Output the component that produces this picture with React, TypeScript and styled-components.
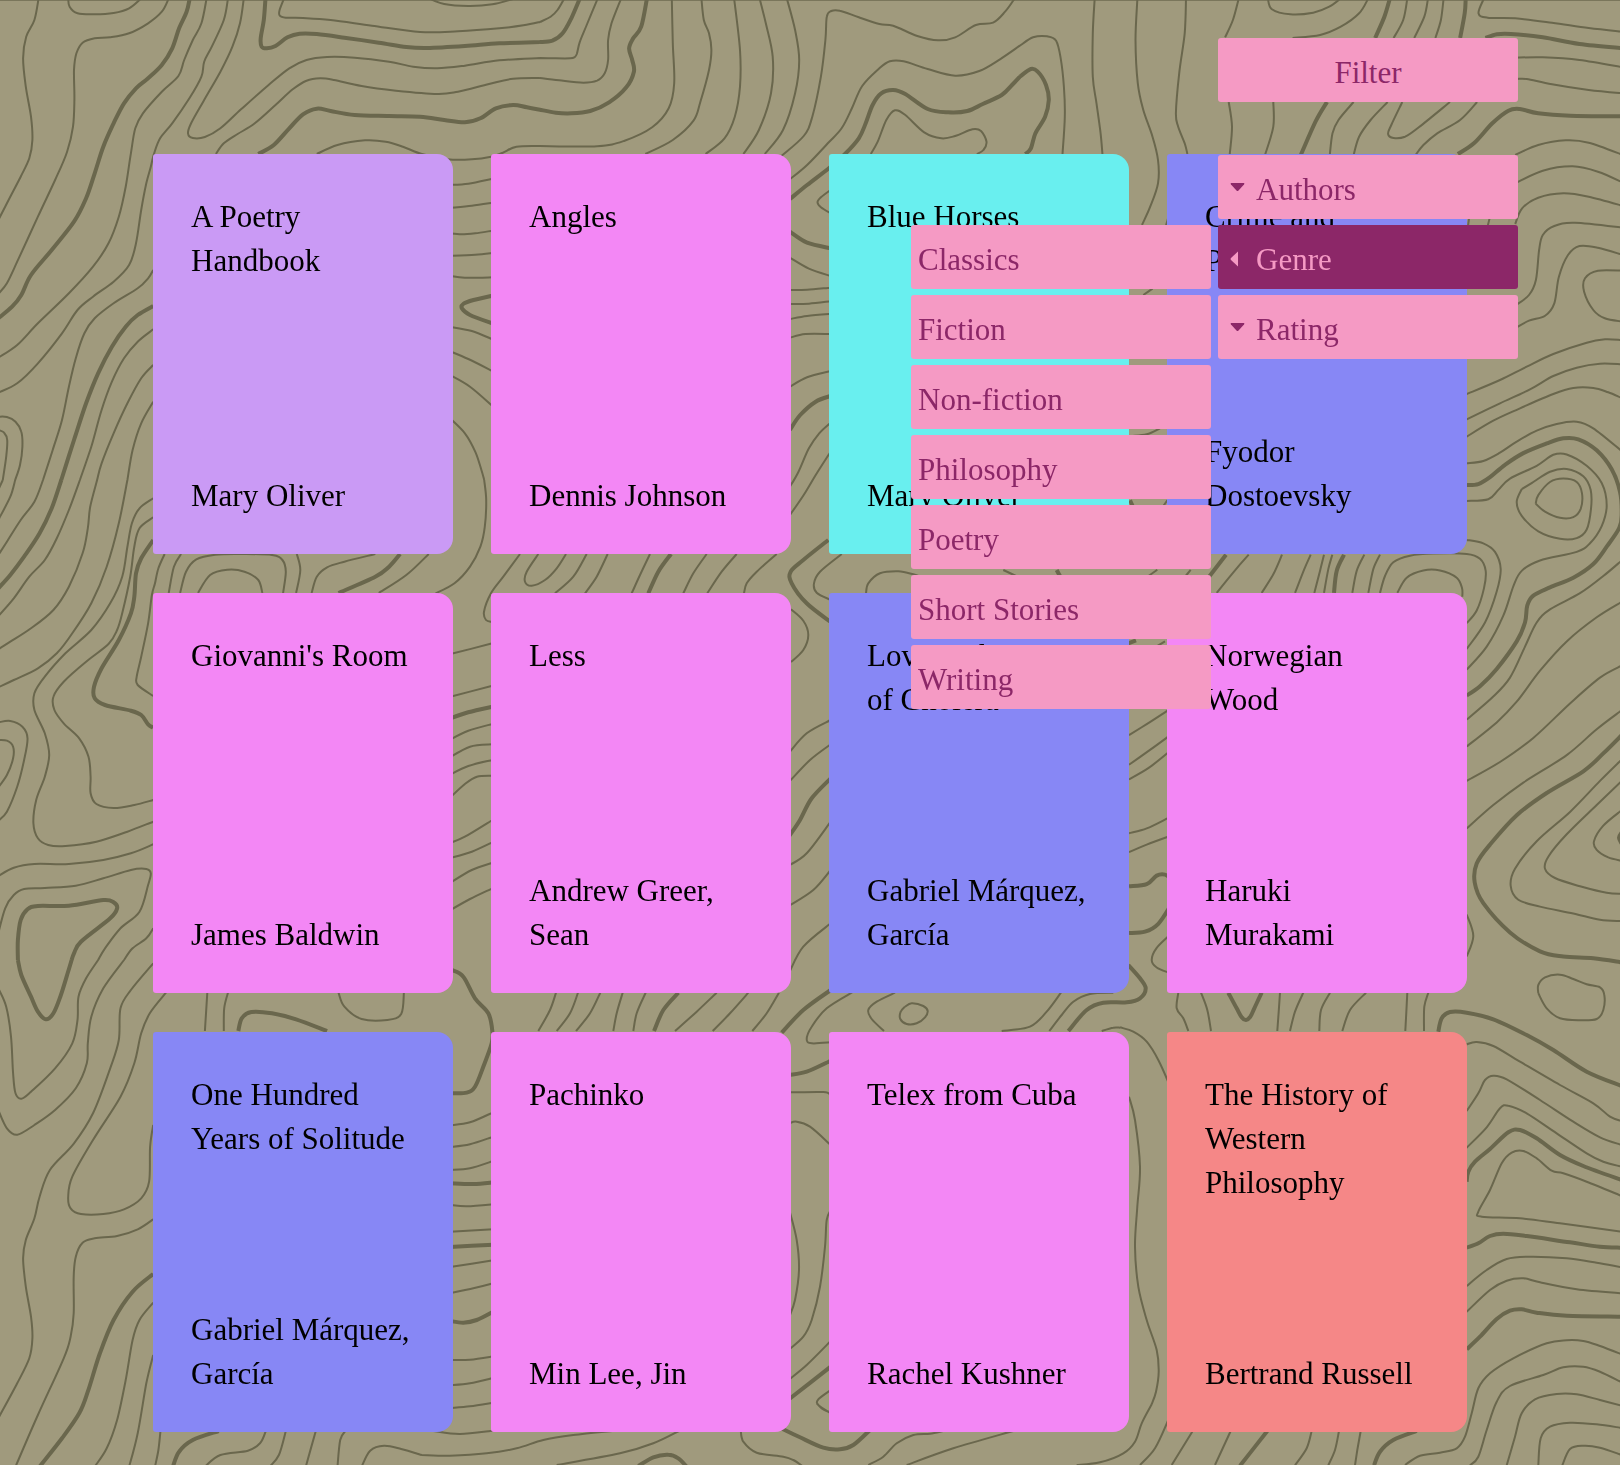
import React, { useState } from 'react';
import styled, { createGlobalStyle, css } from 'styled-components';

/* ---------- palette ---------- */

const color = {
  land: '#a09a7d',
  contour: '#6a674d',
  pink: '#f59ac4',
  plum: '#8c2768',
  poetry: '#ca9af5',
  fiction: '#f387f5',
  nature: '#69efef',
  classic: '#8787f5',
  essay: '#f58787',
};

const GlobalStyle = createGlobalStyle`
  *, *::before, *::after { box-sizing: border-box; }
  body {
    margin: 0;
    background: ${color.land};
    color: #000;
    font-family: 'Liberation Serif', serif;
    font-size: 31px;
    line-height: 44px;
  }
`;

/* ---------- topographic backdrop ---------- */

type Sheet = { x: number; y: number; kx: number; ky: number; thin: string; bold: string };

/* Each survey sheet has its own origin and scale; contours are separated by ";". */
const sheets: Sheet[] = [
  {
    x: 0, y: 0, kx: 2.904, ky: 3,
    thin: `112,-5 100,60 76,110 67,175 75,260 90,350 94,420 85,475 60,530 25,600 -5,660;
198,-5 202,20 225,40 275,43 330,39 375,25 410,-5;
490,-5 470,35 430,70 375,100 320,112 275,115 240,128 222,160 215,210 216,300 212,380 195,455 160,540 110,650 50,785 20,850 -5,882;
600,-5 585,70 560,120 535,180 518,228 470,275 415,340 393,385 380,460 365,560 345,650 315,730 270,800 200,880 110,970 50,1035 -5,1073;
662,-5 650,60 615,140 593,185 585,230 550,295 500,370 465,415 447,462 438,500 425,550 410,630 395,730 375,795 330,845 270,890 225,930 180,1000 110,1090 50,1150 -5,1178;
708,-5 697,70 675,140 640,215 590,305 555,370 546,400 560,414 595,411 640,385 700,328 780,255 840,205 890,180 950,171 1030,173 1130,185 1200,200 1270,205 1350,197 1450,181 1568,174;
825,-5 812,30 812,46 830,53 880,54 960,60 1080,77 1220,96 1330,94 1450,85 1520,76 1568,66;
1245,-5 1290,12 1360,18 1430,13 1490,-3;
627,462 650,430 690,402 740,370 800,315 850,268 890,242 930,235 970,240 1050,258 1150,272 1270,282 1330,275 1420,252 1490,236 1568,234;
920,462 980,435 1060,421 1120,425 1170,440 1225,462 1300,478 1370,478 1426,470 1460,458 1500,440 1568,438;
1305,555 1360,551 1430,536;1305,624 1370,617 1430,608;1305,700 1340,703 1380,700 1430,692;1305,768 1380,764 1430,759;1305,827 1350,833 1430,832;
1305,980 1370,993 1430,1018;1305,1053 1360,1077 1430,1113;1305,1124 1365,1160 1430,1218;
1305,1253 1350,1300 1380,1355 1398,1410 1406,1440;
445,810 430,835 400,865 330,910 275,955 245,1000 220,1075 200,1160 180,1260 153,1350 125,1440;
445,988 400,1025 360,1075 325,1145 295,1230 265,1340 232,1440;
445,1095 410,1135 370,1210 330,1300 295,1390 282,1440;
445,1205 410,1270 385,1350 370,1440;
-5,1250 20,1251 45,1265 62,1295 65,1340 58,1395 44,1440;
-5,1290 12,1298 21,1320 18,1370 8,1440`,
    bold: `551,-5 542,35 520,85 500,145 470,195 430,235 395,265 360,310 330,370 300,440 275,520 250,595 215,665 150,750 90,825 62,885 35,920 -5,955;
771,-5 766,60 757,115 760,140 775,145 800,138 835,112 870,101 920,102 1000,113 1100,128 1180,141 1240,144 1350,138 1450,130 1568,126;
750,462 795,435 840,385 880,343 920,326 960,333 1030,345 1130,348 1220,350 1290,360 1350,367 1395,355 1440,325 1490,315 1530,322 1568,329;
1435,886 1375,900 1345,912 1342,926 1365,945 1435,972;
445,918 400,945 365,980 325,1040 285,1120 250,1210 215,1320 178,1440`,
  },
  {
    x: 480, y: 0, kx: 2.904, ky: 3,
    thin: `174,66 205,50 225,30 245,-5;
174,174 220,175 262,175 274,172 281,162 290,125 310,75 342,-5;
174,234 230,241 300,248 340,242 362,220 372,180 372,120 382,70 410,-5;
174,438 340,439 420,422 500,382 548,325 564,250 560,130 557,-5;
480,462 560,420 620,362 640,305 665,210 672,150 665,100 650,60 643,-5;
655,462 710,415 740,350 755,260 755,150 738,-5;
765,462 810,390 845,280 850,170 830,70 812,-5;
827,462 880,390 915,280 927,180 915,90 891,-5;
875,468 940,408 965,350 990,230 1003,120 1007,50 1020,33 1045,32 1100,52 1160,72 1200,77 1270,108 1330,121 1380,112 1440,75 1490,68 1525,35 1553,-5;
900,538 950,495 1010,430 1050,385 1080,325 1110,258 1160,205 1190,184 1230,184 1300,207 1380,227 1450,213 1510,178 1568,137;
1135,462 1155,425 1180,360 1205,331 1235,345 1290,397 1340,415 1380,408 1430,388 1455,393 1471,425 1462,450 1443,462;
1018,570 990,592 980,607 990,622 1018,640;
900,773 955,806 1018,828;900,870 950,869 1018,863;900,912 955,911 1018,904;900,957 950,948 1018,942;900,1013 945,1002 1018,1002;
900,1160 950,1132 1018,1113;900,1460 925,1415 955,1345 985,1300 1018,1268;1018,1355 975,1425 940,1485 900,1545`,
    bold: `174,126 210,122 240,100 265,55 290,-5;
174,329 220,338 265,340 320,333 375,307 425,262 447,215 442,180 433,145 445,115 468,80 485,-5;
900,597 950,555 1015,503 1060,462 1100,415 1120,370 1140,315 1165,280 1200,270 1235,282 1300,327 1360,337 1415,333 1460,312 1515,285 1545,255 1568,230;
900,695 950,728 1018,745;900,1290 930,1245 975,1205 1018,1188`,
  },
  {
    x: 900, y: 0, kx: 2.178, ky: 3,
    thin: `261,137 290,112 320,109 340,122 350,175 357,260 359,350 354,462;
424,-5 420,100 420,230 428,310 437,400 441,465;
517,-5 513,120 518,250 530,330 550,410 562,480 562,550 545,620 527,675;
623,-5 620,100 608,220 601,340 606,380 620,430 626,462;
738,-5 725,60 708,112;716,306 723,380 718,465;813,306 813,380 795,465;
801,-5 810,28 850,43 900,38 935,20 960,-5;
1020,-5 1000,40 960,80 915,105 855,114;
1105,-5 1096,60 1075,114;988,306 955,360 942,400 936,465;
1150,-5 1142,50 1120,114;1062,306 1025,360 1000,410 988,465;
1184,-5 1178,60 1166,114;
1094,306 1070,375 1063,402 1075,414 1100,410 1130,382 1198,306;
1272,-5 1260,40 1280,53 1340,55 1420,68 1500,84 1575,95;
1340,173 1400,172 1480,180 1575,202;
1345,237 1365,237 1420,253 1500,270 1575,280;
1257,306 1220,360 1170,400 1140,435 1123,465;
1340,465 1390,435 1450,421 1500,428 1575,465;
1340,550 1400,512 1465,499 1520,515 1575,548;
1340,672 1355,625 1390,593 1445,580 1500,590 1575,618;
1340,917 1370,885 1385,840 1392,750 1400,705 1425,678 1470,668 1575,683;
1340,985 1370,962 1405,947 1425,910 1435,830 1455,765 1480,738 1520,743 1575,765;
1575,812 1520,812 1492,835 1490,875 1510,930 1535,955 1575,965;
1240,650 1237,678;1285,650 1280,678;584,655 579,678;550,866 530,885`,
    bold: `261,230 285,207 300,215 318,255 324,300 316,350 295,400 285,445 273,462;
1067,-5 1055,50 1035,114;930,306 905,365 873,465;1232,-5 1230,40 1220,114;
1275,114 1300,103 1330,102 1400,112 1480,132 1575,145;
1215,462 1250,430 1290,370 1325,332 1350,327 1390,340 1460,347 1575,349`,
  },
  {
    x: 1120, y: 340, kx: 3, ky: 3,
    thin: `1040,162 1140,120 1220,80 1300,42 1400,8 1455,-2 1505,0;
1040,238 1140,190 1230,148 1300,108 1370,83 1440,71 1505,73;
1040,290 1120,242 1200,205 1300,162 1360,144 1420,144 1465,157 1505,174;
1040,370 1090,363 1140,338 1190,305 1250,272 1310,252 1370,245 1420,265 1505,333;
35,288 80,283 120,265`,
    bold: '',
  },
  {
    x: 0, y: 480, kx: 2.904, ky: 3,
    thin: `1406,0 1412,60 1408,140 1395,200 1365,260 1320,310 1265,340;
125,0 100,65 60,120 20,185 -5,225;
232,0 200,90 165,175 130,240 85,290 40,355 -5,408;
282,0 262,80 255,145 240,220 200,320 155,390 90,445 30,485 -5,508;
370,0 345,130 310,260 265,370 210,460 165,520 110,565 40,600 -5,622;
44,0 30,50 -5,120;8,0 -5,30;
445,55 405,85 383,130 370,200 355,290 320,370 265,450 190,520 130,590 100,640 100,690 130,760 143,825 130,890 105,960 97,1030 110,1075 140,1095 190,1098 280,1085 370,1055 445,1025;
445,112 405,145 390,200 378,290 355,400 340,450 315,492 250,545 185,605 155,650 158,690 185,730 230,775 257,830 263,890 263,940 280,972 330,984 390,975 445,960;
478,222 460,265 450,310 441,345 430,430 410,530 397,590 400,615 445,648;
526,222 505,260 490,339;
523,339 540,275 570,238 625,224 700,222 790,225 820,240 830,275 822,339;
575,339 610,285 660,269 710,275 750,300 762,339;
862,222 872,270 860,339;
905,339 920,290 950,262 1000,245 1090,222;
1100,339 1180,285 1245,222;
-5,727 30,723 65,740 80,775 70,840 50,920 20,995 -5,1022;
-5,780 20,782 38,800 38,835 20,885 -5,922;
-5,1188 40,1163 100,1152 200,1152 300,1140 380,1120 445,1093;
-5,1360 15,1285 40,1245 70,1227 130,1224 220,1217 300,1195 380,1170 425,1167 438,1180 430,1215 405,1295 350,1345 305,1405 285,1440;
445,1345 425,1375 385,1405 360,1440;
1305,523 1430,490;1305,651 1430,617;1305,780 1360,752 1430,732;1305,833 1365,800 1430,793;1305,885 1360,858 1430,840;
1305,955 1350,912 1385,890 1430,887;1305,1090 1350,1070 1430,1020;1305,1135 1370,1115 1430,1087;1305,1210 1370,1170 1430,1148;1305,1292 1365,1257 1430,1225`,
    bold: `178,0 150,85 115,160 70,230 30,285 -5,325;
445,180 410,235 395,280 390,350 380,400 345,480 295,565 273,620 275,655 305,675 380,692 410,705 430,733 445,743;
983,339 1090,290 1130,260 1162,222;
52,1440 52,1380 60,1320 80,1288 110,1278 200,1277 300,1260 330,1267 340,1285 320,1315 235,1385 215,1420 208,1440;
1305,716 1360,697 1430,680`,
  },
  {
    x: 0, y: 960, kx: 2.904, ky: 3,
    thin: `285,0 250,55 228,110 225,180 210,250 160,325 90,395 62,416 45,400 38,340 32,230 18,140 -5,85;
360,0 300,85 265,170 255,250 252,310 220,385 160,450 100,495 50,524 20,505 -5,450;
445,10 380,90 350,145 345,240 320,325 270,460 215,550 145,630 115,710 100,775 75,840 67,895 75,980 90,1070 94,1135 85,1195 50,1270 -5,1375;
482,98 435,160 410,220 390,310 350,410 270,540 210,650 198,710 205,745 235,762 300,762 360,748 410,715 433,665 436,560 445,495;
445,778 400,808 340,828 275,835 240,848 220,890 214,950 214,1060 205,1130 185,1195 110,1365 45,1520;
445,1028 405,1080 385,1140 365,1260 340,1380 310,1465 275,1520;
445,1185 425,1270 400,1420 375,1520;466,1413 460,1470 450,1520;
602,98 595,213;662,98 651,145 650,213;
983,98 1000,140 1050,177 1125,180 1165,162 1173,98;
772,1413 755,1450 720,1472 640,1485 597,1518;830,1413 810,1485 785,1518;917,1413 888,1520;1003,1413 988,1440 980,1520;
1050,1520 1075,1472 1115,1457 1165,1467 1225,1485`,
    bold: `52,0 62,45 90,110 110,155 133,178 155,160 175,110 195,45 208,0;
445,942 385,995 330,1080 290,1180 255,1295 230,1360 180,1435 115,1520;
692,213 702,175 730,156 790,160 860,178 950,213;
635,1413 560,1440 520,1475 502,1520`,
  },
  {
    x: 420, y: 540, kx: 3, ky: 3,
    thin: `300,42 250,110 213,160 192,215 198,240 215,246;
355,42 320,95 315,125 335,137 375,120 410,85 438,42;
500,42 460,110 405,160;563,42 530,110 495,160;690,42 660,105 635,160;860,42 820,100 790,160;950,42 905,95 862,160;1070,42 1010,95 980,130 972,160;
1265,42 1200,95 1182,130 1190,158 1232,180;
1113,208 1150,242 1165,285 1150,330 1113,366;
1108,637 1160,580 1232,540;1108,725 1170,660 1232,613;1108,976 1160,940 1232,845;1108,1097 1180,1050 1232,990;1108,1297 1150,1220 1232,1150;
408,1358 390,1410 355,1473;474,1358 450,1420 410,1473;541,1358 510,1420 468,1473;608,1358 590,1420 580,1473;677,1358 650,1420 640,1473;
890,1358 830,1415 765,1473;985,1358 930,1420 878,1473;1077,1358 1040,1420 997,1473;
1300,1355 1220,1405 1175,1460 1160,1498 1175,1510 1232,1507`,
    bold: `753,42 715,95 685,160;
1225,0 1150,60 1112,95 1115,130 1160,190 1232,246;
1108,888 1140,840 1175,775 1232,715;
775,1358 730,1410 702,1473;1232,1350 1150,1410 1085,1478;
96,1290 130,1310 165,1375 205,1420 217,1473 215,1510 190,1580 165,1640 140,1658 96,1660`,
  },
  {
    x: 780, y: 540, kx: 3, ky: 3,
    thin: `258,160 265,130 300,100 355,94 400,103 425,112;670,90 715,111;
345,1358 290,1385 265,1410 275,1437 312,1473;
375,1400 395,1390 430,1398 443,1413 435,1432 410,1450 380,1452 361,1437 362,1415 375,1400;
843,1358 800,1415 750,1460 665,1473;
1000,1358 930,1362 880,1385 845,1425 808,1473;
965,1473 1000,1463 1020,1463`,
    bold: `830,90 842,112;
1045,1275 1080,1315 1097,1345 1080,1375 1040,1387 970,1388 920,1410 865,1473`,
  },
  {
    x: 1120, y: 440, kx: 3, ky: 2.904,
    thin: `1040,177 1105,172 1135,145 1170,112 1250,75 1300,43 1340,42 1400,75 1445,125 1460,190 1445,250 1410,300 1370,325 1260,350 1205,380 1180,425 1150,510 1100,600 1040,667;
1205,143 1240,122 1290,92 1340,84 1390,105 1412,145 1413,200 1400,260 1370,285 1320,287 1255,265 1205,220 1190,180 1205,143;
1247,185 1255,160 1290,122 1330,112 1370,122 1386,155 1382,200 1360,224 1320,226 1275,208 1247,185;
1040,290 1090,300 1125,325 1142,375 1130,440 1095,530 1040,607;
780,444 795,395 820,355 870,336 940,330 1040,331 1080,345 1097,380 1092,430 1070,495 1040,532;
832,444 860,400 910,379 960,379 1010,400 1026,430 1027,455;
780,333 760,375 745,444;733,333 710,380 697,444;637,333 625,375 612,444;612,333 600,380 583,444;572,333 553,375 525,444;
486,333 460,390 425,444;386,333 335,390 290,444;212,377 193,400;112,377 78,400;105,602 135,585;
1505,350 1450,395 1380,445 1290,492 1250,530 1215,600 1170,690 1120,745 1040,812;
1505,470 1430,515 1340,585 1260,670 1190,760 1130,820 1040,890;
1505,655 1440,690 1350,765 1240,865 1140,935 1040,990;
1505,785 1430,840 1340,915 1210,995 1120,1060 1040,1128;
1505,928 1440,990 1350,1080 1250,1165 1185,1245 1172,1295 1195,1335 1260,1355 1360,1375 1440,1393 1505,1397;
1505,990 1430,1060 1340,1145 1285,1210 1275,1245 1305,1272 1380,1296 1460,1315 1505,1318;
1505,1075 1450,1120 1422,1165 1430,1190 1465,1212 1505,1222;
1040,1378 1060,1440 1040,1500;
27,857 80,825 144,785;27,943 90,900 144,862;27,986 85,953 144,908;27,1142 80,1128 144,1098;27,1197 80,1175 144,1152;
150,1437 110,1475 95,1510 110,1532 150,1548;142,175 130,192`,
    bold: `1040,131 1075,128 1110,108 1155,72 1210,38 1280,10 1330,-5 1375,-2 1430,30 1475,85 1500,150 1505,215 1498,255 1460,310 1420,360 1360,400 1290,428 1240,452 1222,480 1215,530 1190,585 1130,665 1080,715 1040,742;
672,333 650,380 642,444;318,333 265,400;25,590 48,582;30,175 38,192;
1505,857 1450,910 1390,962 1280,1025 1190,1090 1110,1175 1070,1230 1064,1285 1090,1345 1170,1430 1260,1485 1330,1500 1420,1505 1505,1517;
1505,1140 1497,1155 1505,1172;
27,1296 80,1290 110,1265 135,1262 150,1272;
27,1432 75,1428 115,1405 150,1355`,
  },
  {
    x: 1120, y: 960, kx: 3, ky: 3,
    thin: `0,202 40,215 80,245 115,300 150,378;
27,410 45,480 60,620 52,740 45,860 55,980 80,1080 110,1170 116,1235 108,1295 95,1333;
175,98 170,145 190,175 205,213;243,98 262,150 273,213;480,98 472,213;550,98 525,155 510,213;630,98 603,150 598,213;738,98 690,150 667,213;862,98 856,213;925,98 913,140 912,213;
1255,100 1255,75 1275,52 1320,44 1360,57 1400,73 1440,82 1453,105 1450,150 1430,177 1380,181 1320,175 1280,145 1255,100;
1040,253 1070,246 1120,258 1200,305 1320,375 1420,430 1470,470 1505,483;
1040,453 1075,400 1095,360 1120,347 1160,358 1260,420 1360,485 1440,532 1505,555;
1040,563 1100,502 1140,445 1165,437 1220,460 1310,520 1400,580 1450,605 1505,620;
1505,708 1400,665 1330,640 1295,632 1250,595 1210,573 1175,578 1145,610 1110,690 1075,755 1085,770 1200,775 1320,790 1505,815;
1040,978 1100,930 1160,897 1230,890 1340,895 1430,908 1505,922;
1040,1055 1110,990 1160,962 1210,955 1260,967 1370,988 1505,1000;
1505,1183 1440,1158 1390,1143 1340,1141 1280,1150 1180,1195 1110,1240 1075,1285 1055,1360 1035,1430 1010,1465 960,1478 900,1487 855,1515;
1505,1267 1440,1235 1390,1220 1330,1222 1270,1245 1170,1278 1130,1325 1100,1410 1075,1490 1050,1516;
1505,1337 1440,1320 1370,1303 1310,1302 1245,1318 1205,1360 1185,1430 1160,1516;
1505,1404 1430,1393 1350,1388 1290,1400 1262,1435 1255,1516;
1505,1485 1440,1463 1390,1457 1350,1467 1327,1516;
722,1413 712,1470 705,1516;657,1413 645,1470 625,1516;575,1413 560,1465 525,1516`,
    bold: `325,98 350,145 365,172 378,180 391,170 403,145 425,98;
955,215 965,175 990,156 1040,158 1120,178 1220,225 1300,270 1400,335 1505,378;
1040,665 1045,635 1065,605 1110,567 1165,517 1200,510 1250,535 1320,585 1390,618 1505,660;
1040,863 1075,850 1110,828 1150,821 1220,828 1350,847 1440,860 1505,863;
1040,1168 1080,1130 1130,1077 1170,1052 1205,1048 1250,1058 1340,1067 1505,1070;
890,1413 820,1440 780,1475 762,1516`,
  },
  {
    x: 420, y: 980, kx: 3, ky: 3,
    thin: `1108,337 1210,336 1232,345;
1108,430 1130,425 1170,440 1232,495;
1108,690 1130,780 1137,870 1125,960 1108,1010;
1232,690 1220,720 1215,800 1200,920 1175,1020 1150,1070 1108,1108;
1108,1198 1160,1155 1232,1083;1232,1230 1195,1258 1195,1275 1232,1300;
90,436 150,427 220,397;90,501 150,493 220,470;90,570 150,565 220,543;90,675 140,679 220,673;90,755 220,748;90,861 220,841;90,939 160,925 220,910;
90,1140 150,1139 220,1129;90,1216 150,1210 220,1194;90,1284 150,1279 220,1268;
40,1353 120,1362 220,1352;
5,1425 90,1427 200,1420 290,1405 370,1380 460,1365 585,1352;
410,1455 600,1420 700,1390 777,1353;
962,1350 970,1385 1010,1418 1090,1430 1120,1440 1150,1460`,
    bold: `1108,285 1160,275 1232,242;1108,1257 1232,1160;
90,610 160,612 220,607;90,801 220,794;90,1023 130,1028 170,1020 220,995;
655,1458 700,1432 745,1424 775,1435 800,1460`,
  },
  {
    x: 780, y: 1405, kx: 3, ky: 3,
    thin: `110,-5 125,10 150,22;
265,180 310,155 350,115 400,90 450,86 490,78;
380,180 520,130 700,78;
890,180 960,172 1030,145 1065,110 1085,55 1115,-2;
1080,180 1125,130 1165,45;1175,180 1238,78;1305,180 1352,78`,
    bold: `0,68 60,97 130,128 180,133 220,120 270,75;1380,182 1462,78`,
  },
];

/* Runs a smooth curve through every surveyed point of each contour. */
function smooth(sheet: Sheet, lines: string): string {
  return lines
    .split(';')
    .filter((line) => line.trim())
    .map((line) => {
      const p = line
        .trim()
        .split(/\s+/)
        .map((pair) => {
          const [x, y] = pair.split(',').map(Number);
          return [sheet.x + x / sheet.kx, sheet.y + y / sheet.ky];
        });
      let d = `M${p[0][0].toFixed(1)} ${p[0][1].toFixed(1)}`;
      for (let i = 0; i < p.length - 1; i += 1) {
        const a = p[i - 1] ?? p[i];
        const b = p[i];
        const c = p[i + 1];
        const e = p[i + 2] ?? c;
        const pts = [
          b[0] + (c[0] - a[0]) / 6, b[1] + (c[1] - a[1]) / 6,
          c[0] - (e[0] - b[0]) / 6, c[1] - (e[1] - b[1]) / 6,
          c[0], c[1],
        ];
        d += `C${pts.map((n) => n.toFixed(1)).join(' ')}`;
      }
      return d;
    })
    .join('');
}

const thinPath = sheets.map((s) => smooth(s, s.thin)).join('');
const boldPath = sheets.map((s) => smooth(s, s.bold)).join('');

const Backdrop = styled.svg`
  position: fixed;
  inset: 0;
  z-index: -1;
  width: 100%;
  height: 100%;
  fill: none;
  stroke: ${color.contour};
`;

function Topography() {
  return (
    <Backdrop viewBox="0 0 1620 1465" preserveAspectRatio="xMinYMin slice" aria-hidden="true">
      <path d={thinPath} strokeWidth="2" />
      <path d={boldPath} strokeWidth="4" />
      <path d="M0 0.5H1620" strokeWidth="1" opacity="0.7" />
    </Backdrop>
  );
}

/* ---------- books ---------- */

type Book = { title: string; author: string; tone: string };

const books: Book[] = [
  { title: 'A Poetry Handbook', author: 'Mary Oliver', tone: color.poetry },
  { title: 'Angles', author: 'Dennis Johnson', tone: color.fiction },
  { title: 'Blue Horses', author: 'Mary Oliver', tone: color.nature },
  { title: 'Crime and Punishment', author: 'Fyodor Dostoevsky', tone: color.classic },
  { title: "Giovanni's Room", author: 'James Baldwin', tone: color.fiction },
  { title: 'Less', author: 'Andrew Greer, Sean', tone: color.fiction },
  { title: 'Love in the Time of Cholera', author: 'Gabriel Márquez, García', tone: color.classic },
  { title: 'Norwegian\nWood', author: 'Haruki\nMurakami', tone: color.fiction },
  { title: 'One Hundred Years of Solitude', author: 'Gabriel Márquez, García', tone: color.classic },
  { title: 'Pachinko', author: 'Min Lee, Jin', tone: color.fiction },
  { title: 'Telex from Cuba', author: 'Rachel Kushner', tone: color.fiction },
  { title: 'The History of Western Philosophy', author: 'Bertrand Russell', tone: color.essay },
];

const Page = styled.div`
  position: relative;
  min-height: 100vh;
`;

const Shelf = styled.main`
  display: grid;
  grid-template-columns: repeat(auto-fill, 300px);
  justify-content: center;
  gap: 39px 38px;
  padding: 154px 102px 33px;
`;

const Cover = styled.article<{ $tone: string }>`
  display: flex;
  flex-direction: column;
  justify-content: space-between;
  min-height: 400px;
  padding: 41px 42px 36px 38px;
  border-radius: 3px 16px 16px 3px;
  background: ${({ $tone }) => $tone};
  white-space: pre-line;
`;

const Title = styled.h2`
  margin: 0;
  font: inherit;
`;

const Author = styled.p`
  margin: 0;
`;

/* ---------- filter menu ---------- */

const FilterNav = styled.nav`
  position: absolute;
  top: 38px;
  right: 102px;
  display: flex;
  flex-direction: column;
  gap: 53px;
`;

const Menu = styled.ul`
  display: flex;
  flex-direction: column;
  gap: 6px;
  margin: 0;
  padding: 0;
  list-style: none;
`;

const SubMenu = styled(Menu)`
  position: absolute;
  top: 0;
  right: 100%;
  margin-right: 7px;
`;

const MenuItem = styled.li`
  position: relative;
`;

const Button = styled.button<{ $kind: 'main' | 'group' | 'option'; $active?: boolean }>`
  display: flex;
  align-items: center;
  width: 300px;
  height: 64px;
  padding: 5px 7px 0;
  border: 0;
  border-radius: 3px;
  background: ${({ $active }) => ($active ? color.plum : color.pink)};
  color: ${({ $active }) => ($active ? color.pink : color.plum)};
  font: inherit;
  text-align: left;
  cursor: pointer;

  ${({ $kind }) => $kind === 'main' && css`justify-content: center;`}
  ${({ $kind }) => $kind === 'group' && css`padding-left: 12px; gap: 11px;`}
`;

const Caret = styled.svg`
  width: 15px;
  height: 18px;
  margin-bottom: 2px;
  fill: currentColor;
`;

const genres = ['Classics', 'Fiction', 'Non-fiction', 'Philosophy', 'Poetry', 'Short Stories', 'Writing'];

const groups: { name: string; options: string[] }[] = [
  { name: 'Authors', options: [...new Set(books.map((b) => b.author))] },
  { name: 'Genre', options: genres },
  { name: 'Rating', options: ['1', '2', '3', '4', '5'] },
];

export default function App() {
  const [expanded, setExpanded] = useState(true);
  const [open, setOpen] = useState<string | null>('Genre');

  return (
    <Page>
      <GlobalStyle />
      <Topography />
      <Shelf>
        {books.map((book) => (
          <Cover key={book.title} $tone={book.tone}>
            <Title>{book.title}</Title>
            <Author>{book.author}</Author>
          </Cover>
        ))}
      </Shelf>
      <FilterNav aria-label="Book filters">
        <Button type="button" $kind="main" aria-expanded={expanded} onClick={() => setExpanded(!expanded)}>
          Filter
        </Button>
        {expanded && (
          <Menu>
            {groups.map(({ name, options }) => {
              const active = open === name;
              return (
                <MenuItem key={name}>
                  <Button
                    type="button"
                    $kind="group"
                    $active={active}
                    aria-expanded={active}
                    onClick={() => setOpen(active ? null : name)}
                  >
                    <Caret viewBox="0 0 15 18" aria-hidden="true">
                      {active ? (
                        <path d="M8 1.5V16.5L1 10Q0 9 1 8Z" />
                      ) : (
                        <path d="M1.2 3H13.8Q15 3.2 14 4.5L8.5 10.4Q7.5 11.4 6.5 10.4L1 4.5Q0 3.2 1.2 3Z" />
                      )}
                    </Caret>
                    {name}
                  </Button>
                  {active && (
                    <SubMenu>
                      {options.map((option) => (
                        <li key={option}>
                          <Button type="button" $kind="option">{option}</Button>
                        </li>
                      ))}
                    </SubMenu>
                  )}
                </MenuItem>
              );
            })}
          </Menu>
        )}
      </FilterNav>
    </Page>
  );
}
